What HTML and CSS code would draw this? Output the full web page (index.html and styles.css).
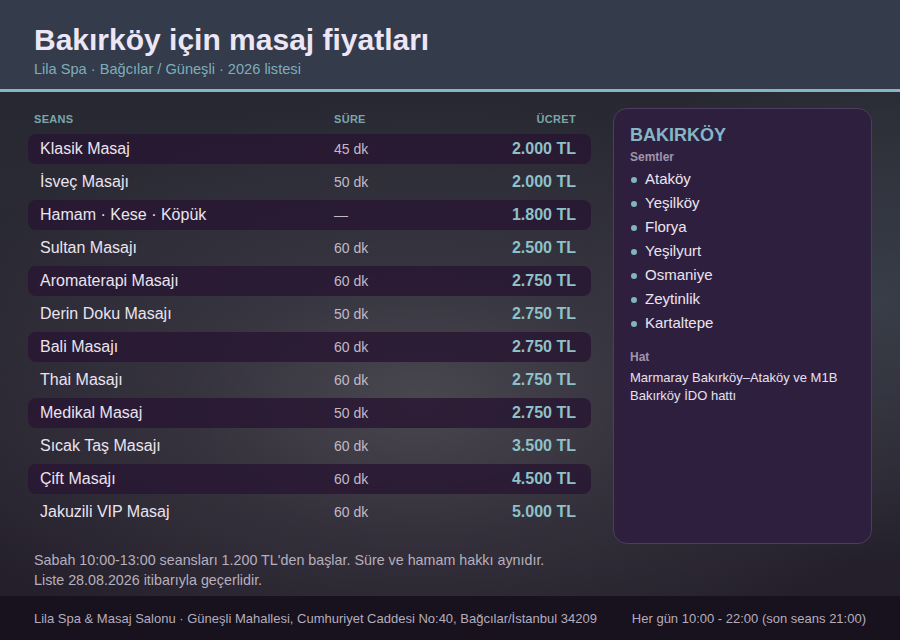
FILE: index.html
```html
<!DOCTYPE html>
<html lang="tr">
<head>
<meta charset="utf-8">
<title>Bakırköy için masaj fiyatları</title>
<link rel="stylesheet" href="styles.css">
</head>
<body>
<div class="page">
  <header class="top">
    <h1 class="title">Bakırköy için masaj fiyatları</h1>
    <p class="subtitle">Lila Spa · Bağcılar / Güneşli · 2026 listesi</p>
  </header>
  <main class="main">
    <div class="columns">
      <section class="table">
        <div class="thead">
          <span>Seans</span><span>Süre</span><span class="r">Ücret</span>
        </div>
        <div class="row alt"><span class="name">Klasik Masaj</span><span class="dur">45 dk</span><span class="price">2.000 TL</span></div>
        <div class="row"><span class="name">İsveç Masajı</span><span class="dur">50 dk</span><span class="price">2.000 TL</span></div>
        <div class="row alt"><span class="name">Hamam · Kese · Köpük</span><span class="dur">—</span><span class="price">1.800 TL</span></div>
        <div class="row"><span class="name">Sultan Masajı</span><span class="dur">60 dk</span><span class="price">2.500 TL</span></div>
        <div class="row alt"><span class="name">Aromaterapi Masajı</span><span class="dur">60 dk</span><span class="price">2.750 TL</span></div>
        <div class="row"><span class="name">Derin Doku Masajı</span><span class="dur">50 dk</span><span class="price">2.750 TL</span></div>
        <div class="row alt"><span class="name">Bali Masajı</span><span class="dur">60 dk</span><span class="price">2.750 TL</span></div>
        <div class="row"><span class="name">Thai Masajı</span><span class="dur">60 dk</span><span class="price">2.750 TL</span></div>
        <div class="row alt"><span class="name">Medikal Masaj</span><span class="dur">50 dk</span><span class="price">2.750 TL</span></div>
        <div class="row"><span class="name">Sıcak Taş Masajı</span><span class="dur">60 dk</span><span class="price">3.500 TL</span></div>
        <div class="row alt"><span class="name">Çift Masajı</span><span class="dur">60 dk</span><span class="price">4.500 TL</span></div>
        <div class="row"><span class="name">Jakuzili VIP Masaj</span><span class="dur">60 dk</span><span class="price">5.000 TL</span></div>
      </section>
      <aside class="panel">
        <h2 class="district">BAKIRKÖY</h2>
        <h3 class="label">Semtler</h3>
        <ul class="areas">
          <li>Ataköy</li>
          <li>Yeşilköy</li>
          <li>Florya</li>
          <li>Yeşilyurt</li>
          <li>Osmaniye</li>
          <li>Zeytinlik</li>
          <li>Kartaltepe</li>
        </ul>
        <h3 class="label hat">Hat</h3>
        <p class="transit">Marmaray Bakırköy–Ataköy ve M1B Bakırköy İDO hattı</p>
      </aside>
    </div>
    <div class="notes">
      <p>Sabah 10:00-13:00 seansları 1.200 TL'den başlar. Süre ve hamam hakkı aynıdır.</p>
      <p>Liste 28.08.2026 itibarıyla geçerlidir.</p>
    </div>
  </main>
  <footer class="foot">
    <span>Lila Spa &amp; Masaj Salonu · Güneşli Mahallesi, Cumhuriyet Caddesi No:40, Bağcılar/İstanbul 34209</span>
    <span>Her gün 10:00 - 22:00 (son seans 21:00)</span>
  </footer>
</div>
</body>
</html>
```
FILE: styles.css
```css
* { box-sizing: border-box; margin: 0; padding: 0; }
html, body { width: 900px; height: 640px; overflow: hidden; }
body {
  font-family: "Liberation Sans", Arial, sans-serif;
  background: #221f29;
  color: #e8e0ee;
}
.page {
  width: 900px;
  height: 640px;
  display: flex;
  flex-direction: column;
  background:
    radial-gradient(ellipse 520px 300px at 420px 400px, rgba(78,76,84,0.85) 0%, rgba(66,64,74,0.5) 45%, rgba(40,36,48,0) 100%),
    radial-gradient(ellipse 300px 260px at 880px 300px, rgba(60,66,76,0.8) 0%, rgba(50,54,64,0) 100%),
    linear-gradient(180deg, #25272f 0%, #2a2a34 30%, #282430 70%, #221d28 100%);
}
.top {
  height: 92px;
  background: #343b4b;
  border-bottom: 3px solid #84b6c8;
  padding: 22px 34px 0;
}
.title {
  font-size: 30px;
  font-weight: 700;
  color: #ede6f6;
  line-height: 36px;
}
.subtitle {
  font-size: 14.6px;
  color: #7eaebb;
  line-height: 20px;
  margin-top: 1px;
}
.main {
  flex: 1;
  display: flex;
  flex-direction: column;
  padding: 16px 28px 6px;
}
.columns {
  flex: 1;
  display: flex;
  gap: 22px;
}
.table {
  flex: 1;
  display: flex;
  flex-direction: column;
  gap: 3px;
}
.thead {
  display: grid;
  grid-template-columns: 300px 1fr auto;
  height: 21px;
  margin-bottom: 2px;
  align-items: center;
  padding: 0 15px 0 6px;
  font-size: 11px;
  font-weight: 700;
  text-transform: uppercase;
  color: #7aa6aa;
  letter-spacing: 0.3px;
}
.r { text-align: right; }
.row {
  display: grid;
  grid-template-columns: 294px 1fr auto;
  align-items: center;
  height: 30px;
  padding: 0 15px 0 12px;
  border-radius: 8px;
}
.row.alt { background: rgba(40, 22, 50, 0.82); }
.name { font-size: 16px; color: #ebe3ef; }
.dur { font-size: 14px; color: #c2b9c6; }
.price { font-size: 16px; font-weight: 700; color: #8ec1c8; text-align: right; }
.panel {
  width: 259px;
  background: #2f1f3f;
  border: 1px solid #4d3d5e;
  border-radius: 14px;
  padding: 15px 16px;
}
.district {
  font-size: 18px;
  font-weight: 700;
  color: #86b6c6;
  line-height: 22px;
}
.label {
  font-size: 12px;
  font-weight: 700;
  color: #a095ab;
  line-height: 16px;
  margin-top: 3px;
}
.areas {
  list-style: none;
  margin-top: 2px;
}
.areas li {
  display: flex;
  align-items: center;
  gap: 8px;
  font-size: 15px;
  line-height: 24px;
  color: #ece4f0;
  padding-left: 1px;
}
.areas li::before {
  content: "";
  width: 6px;
  height: 6px;
  border-radius: 50%;
  background: #80b6bd;
  margin-top: 2px;
}
.label.hat { margin-top: 14px; }
.transit {
  font-size: 13px;
  line-height: 18px;
  color: #e8e0ee;
  margin-top: 4px;
}
.notes {
  margin-top: 6px;
  padding-left: 6px;
  font-size: 14.3px;
  line-height: 20px;
  color: #b7afbf;
}
.foot {
  height: 44px;
  background: #17121e;
  display: flex;
  align-items: center;
  justify-content: space-between;
  padding: 0 34px;
  font-size: 13px;
  color: #b5adbd;
}
```
